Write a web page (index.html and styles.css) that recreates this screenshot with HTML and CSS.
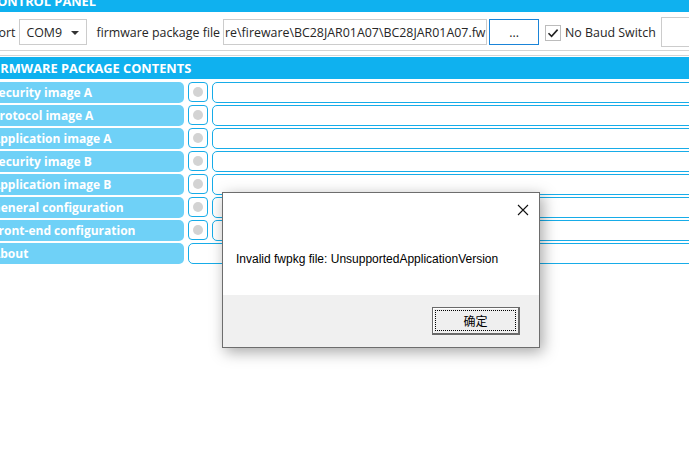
FILE: index.html
```html
<!DOCTYPE html>
<html lang="en">
<head>
  <meta charset="UTF-8" />
  <title>Firmware Update Tool</title>
  <link rel="stylesheet" href="styles.css">
</head>
<body>
  <div class="app">
    <div class="section-title">CONTROL PANEL</div>

    <div class="controls">
      <span class="lbl port-lbl">Port</span>
      <div class="combo">COM9<span class="arrow"></span></div>
      <span class="lbl file-lbl">firmware package file</span>
      <div class="path"><span>re\fireware\BC28JAR01A07\BC28JAR01A07.fwpkg</span></div>
      <button class="browse">...</button>
      <label class="check">
        <span class="box">
          <svg width="12" height="12" viewBox="0 0 12 12"><path d="M1.5 6.2 L4.6 9.3 L10.6 2.6" fill="none" stroke="#222" stroke-width="1.6"/></svg>
        </span>
        No Baud Switch
      </label>
      <div class="extra"></div>
    </div>

    <div class="divider"></div>

    <div class="section-title">FIRMWARE PACKAGE CONTENTS</div>

    <div class="contents">
      <div class="row"><div class="name">Security image A</div><div class="led"><i></i></div><div class="value"></div></div>
      <div class="row"><div class="name">Protocol image A</div><div class="led"><i></i></div><div class="value"></div></div>
      <div class="row"><div class="name">Application image A</div><div class="led"><i></i></div><div class="value"></div></div>
      <div class="row"><div class="name">Security image B</div><div class="led"><i></i></div><div class="value"></div></div>
      <div class="row"><div class="name">Application image B</div><div class="led"><i></i></div><div class="value"></div></div>
      <div class="row"><div class="name">General configuration</div><div class="led"><i></i></div><div class="value"></div></div>
      <div class="row"><div class="name">Front-end configuration</div><div class="led"><i></i></div><div class="value"></div></div>
      <div class="row about"><div class="name">About</div><div class="value wide"></div></div>
    </div>
  </div>

  <div class="dialog">
    <div class="dialog-body">
      <span class="close">
        <svg width="12" height="12" viewBox="0 0 12 12"><path d="M1 1 L11 11 M11 1 L1 11" stroke="#111" stroke-width="1.1"/></svg>
      </span>
      <p class="msg">Invalid fwpkg file: UnsupportedApplicationVersion</p>
    </div>
    <div class="dialog-foot">
      <button class="ok"><span>确定</span></button>
    </div>
  </div>
</body>
</html>
```

FILE: styles.css
```css
:root {
  --title: #0fb1ef;
  --label: #6fd1f7;
  --line: #17ace8;
  --gray-border: #cccccc;
  --text: #262626;
}

body {
  margin: 0;
  overflow: hidden;
  background: #ffffff;
  font-family: "Open Sans", "Liberation Sans", sans-serif;
  color: var(--text);
}

.app {
  width: 800px;
  margin-left: -11px;
  margin-top: -10px;
}

.section-title {
  height: 22px;
  line-height: 22px;
  padding-left: 0;
  background: var(--title);
  color: #fff;
  font-weight: bold;
  font-size: 12.8px;
}

/* top row */
.controls {
  height: 38px;
  display: flex;
  align-items: flex-start;
  padding-top: 7px;
  box-sizing: border-box;
  font-size: 12.4px;
}

.lbl {
  line-height: 27px;
}

.port-lbl {
  margin-left: 2px;
  margin-right: 4px;
}

.combo {
  width: 68px;
  height: 26px;
  box-sizing: border-box;
  border: 1px solid var(--gray-border);
  padding-left: 6px;
  line-height: 25px;
  position: relative;
}

.combo .arrow {
  position: absolute;
  right: 7px;
  top: 11px;
  border-left: 4px solid transparent;
  border-right: 4px solid transparent;
  border-top: 4px solid #333;
}

.file-lbl {
  margin-left: 9px;
  margin-right: 3px;
}

.path {
  width: 264px;
  height: 26px;
  box-sizing: border-box;
  border: 1px solid var(--gray-border);
  overflow: hidden;
  white-space: nowrap;
  line-height: 25px;
  padding-left: 1px;
}

.browse {
  width: 50px;
  height: 26px;
  margin-left: 2px;
  border: 1px solid #1a84d8;
  background: #fff;
  font: inherit;
  color: var(--text);
  padding: 0;
}

.check {
  display: flex;
  align-items: center;
  height: 27px;
  margin-left: 6px;
  gap: 4px;
}

.check .box {
  width: 16px;
  height: 16px;
  box-sizing: border-box;
  border: 1px solid #bcbcbc;
  display: flex;
  align-items: center;
  justify-content: center;
}

.extra {
  width: 60px;
  height: 30px;
  margin-top: -2px;
  margin-left: 5px;
  box-sizing: border-box;
  border: 1px solid var(--gray-border);
}

.divider {
  height: 6px;
  box-sizing: border-box;
  border-top: 1px solid #d4d4d4;
  border-bottom: 1px solid #d4d4d4;
  margin-bottom: 1px;
}

/* package contents */
.contents {
  padding-top: 3px;
  display: flex;
  flex-direction: column;
  gap: 2px;
}

.row {
  display: grid;
  grid-template-columns: 195px 20px 1fr;
  column-gap: 4px;
  height: 21px;
}

.row.about {
  grid-template-columns: 195px 1fr;
}

.name {
  background: var(--label);
  color: #fff;
  font-weight: bold;
  font-size: 12px;
  line-height: 22px;
  padding-left: 3px;
  border-radius: 0 5px 5px 0;
  white-space: nowrap;
  overflow: hidden;
}

.led {
  height: 20px;
  box-sizing: border-box;
  border: 1px solid var(--line);
  border-radius: 4px;
  display: flex;
  align-items: center;
  justify-content: center;
}

.led i {
  width: 10px;
  height: 10px;
  border-radius: 50%;
  background: #d3d3d3;
}

.value {
  box-sizing: border-box;
  border: 1px solid var(--line);
  border-radius: 5px;
}

/* message box */
.dialog {
  position: absolute;
  left: 222px;
  top: 192px;
  width: 318px;
  height: 156px;
  box-sizing: border-box;
  border: 1px solid #6d6d6d;
  background: #fff;
  box-shadow: 3px 4px 14px rgba(0, 0, 0, 0.35);
  display: flex;
  flex-direction: column;
  font-family: "Liberation Sans", "Noto Sans CJK SC", sans-serif;
}

.dialog-body {
  height: 102px;
  position: relative;
}

.close {
  position: absolute;
  right: 10px;
  top: 9px;
}

.msg {
  margin: 0;
  position: absolute;
  left: 13px;
  top: 59px;
  font-size: 12px;
  color: #000;
}

.dialog-foot {
  flex: 1;
  background: #f0f0f0;
  display: flex;
  justify-content: flex-end;
  align-items: flex-start;
  padding: 12px 19px 0 0;
}

.ok {
  width: 88px;
  height: 28px;
  padding: 2px;
  box-sizing: border-box;
  border: 1px solid #6a6a6a;
  border-right-width: 2px;
  border-bottom-width: 2px;
  background: #efefef;
  box-shadow: inset 1px 1px #fff;
}

.ok span {
  display: block;
  height: 100%;
  border: 1px dotted #000;
  box-sizing: border-box;
  font-family: "Noto Sans CJK SC", sans-serif;
  font-size: 12px;
  line-height: 19px;
  color: #000;
}
```
